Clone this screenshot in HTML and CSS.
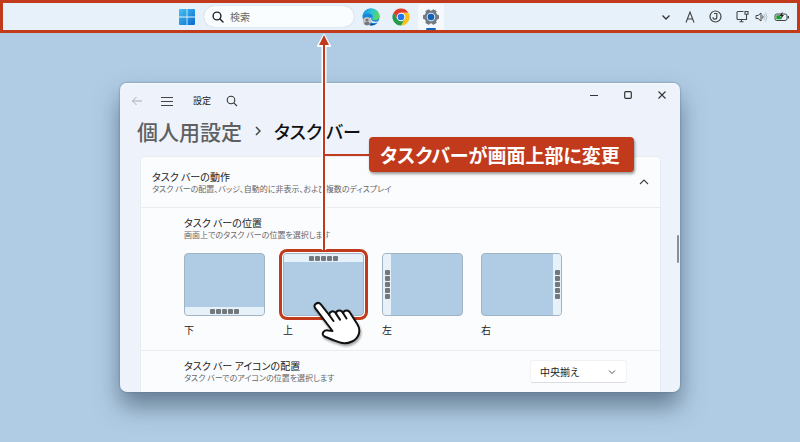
FILE: index.html
```
<!DOCTYPE html>
<html lang="ja">
<head>
<meta charset="utf-8">
<meta name="viewport" content="width=device-width, initial-scale=1">
<title>設定</title>
<link rel="stylesheet" href="styles.css">
</head>
<body>
<header class="taskbar">
  <nav class="apps">
    <button class="app" type="button" aria-label="スタート">
      <svg width="16" height="16" viewBox="0 0 16 16">
        <defs><linearGradient id="start" x1="0" y1="0" x2="1" y2="1"><stop offset="0" stop-color="#45c4f2"/><stop offset="1" stop-color="#0869cf"/></linearGradient></defs>
        <path fill="url(#start)" d="M1 0h6.600v7.600H0V1a1 1 0 0 1 1-1zM8.400 0H15a1 1 0 0 1 1 1v6.600H8.400zM0 8.400h7.600V16H1a1 1 0 0 1-1-1zM8.400 8.400H16V15a1 1 0 0 1-1 1H8.400z"/>
      </svg>
    </button>
    <label class="search">
      <svg width="12" height="12" viewBox="0 0 12 12" fill="none" stroke="#222" stroke-width="1.400" stroke-linecap="round"><circle cx="5" cy="5" r="3.900"/><path d="M8 8l3 3"/></svg>
      <input type="search" placeholder="検索" aria-label="検索">
    </label>
    <button class="app" type="button" aria-label="Edge">
      <svg width="18" height="18" viewBox="0 0 18 18">
        <defs>
          <linearGradient id="edge-top" x1="0" y1="0.300" x2="1" y2="0.500"><stop offset="0" stop-color="#1792df"/><stop offset="0.500" stop-color="#2cc3dc"/><stop offset="1" stop-color="#62d84e"/></linearGradient>
        </defs>
        <circle cx="9" cy="9" r="8.500" fill="#1686dc"/>
        <path fill="url(#edge-top)" d="M.6 8.500C1 3.500 4.600.5 9 .5c5 0 8.500 3.600 8.500 7.400 0 2.900-2.200 4.300-4.600 4.300-2 0-2.900-.7-2.900-1.400 0-.6.8-.9.8-2.200 0-1.700-1.700-3.200-4.200-3.200C3.600 5.400 1.400 6.800.6 8.500z"/>
        <path fill="#0d4f94" d="M6.500 8.500c-1.500 4 1.500 7.600 5 7.600 2 0 3.700-.8 4.700-2C14.500 16.500 12 17.600 9 17.500 4 17 3.500 11 6.500 8.500z"/>
        <path fill="#e4f0fa" d="M9.600 9.200c-.6.800-.7 2.600.6 3.600 1.700 1.300 4.700 1.200 6.400.2l-.6 1.300c-2.600 1.300-7.200 1-8.200-1.800-.5-1.600.4-3 1.800-3.300z"/>
        <circle cx="5" cy="13.300" r="4.200" fill="#c3c5c8"/><circle cx="5" cy="12" r="1.600" fill="#74777c"/><path d="M2.200 16c0-3 5.600-3 5.600 0-1.600 1.600-4 1.600-5.600 0z" fill="#74777c"/>
      </svg>
    </button>
    <button class="app" type="button" aria-label="Chrome">
      <svg width="18" height="18" viewBox="0 0 18 18">
        <path fill="#e33b2e" d="M1.600 4.750A8.500 8.500 0 0 1 16.400 4.750H9L5.300 11.100z"/>
        <path fill="#fbc116" d="M16.400 4.750A8.500 8.500 0 0 1 9 17.500L12.700 11.100 9 4.750z"/>
        <path fill="#229b4c" d="M9 17.500A8.500 8.500 0 0 1 1.600 4.750L5.300 11.100H12.700z"/>
        <circle cx="9" cy="9" r="4.300" fill="#fff"/><circle cx="9" cy="9" r="3.300" fill="#2077e8"/>
      </svg>
    </button>
    <button class="app app-active" type="button" aria-label="設定">
      <svg width="18" height="18" viewBox="0 0 18 18">
        <g fill="#727a84"><circle cx="9" cy="9" r="6.600"/>
        <rect x="6.700" y="1" width="4.600" height="16" rx="1" transform="rotate(30 9 9)"/>
        <rect x="6.700" y="1" width="4.600" height="16" rx="1" transform="rotate(90 9 9)"/>
        <rect x="6.700" y="1" width="4.600" height="16" rx="1" transform="rotate(150 9 9)"/></g>
        <circle cx="9" cy="9" r="4.300" fill="#dce8f2"/><circle cx="9" cy="9" r="3.300" fill="#1261b4"/>
      </svg>
    </button>
  </nav>
  <div class="tray">
    <svg width="10" height="10" viewBox="0 0 10 10" fill="none" stroke="#333" stroke-width="1.300"><path d="M1.500 3.500L5 7l3.500-3.500"/></svg>
    <svg width="10" height="12" viewBox="0 0 10 12" fill="none" stroke="#444" stroke-width="1.100"><path d="M1 11.500L5 1l4 10.500M2.400 8h5.200"/></svg>
    <svg width="13" height="13" viewBox="0 0 13 13" fill="none" stroke="#444" stroke-width="1.200"><circle cx="6.500" cy="6.500" r="5.500"/><path d="M5 3.500h2.800v3.800a1.900 1.900 0 0 1-3.800 0"/></svg>
    <span class="status">
      <svg width="13" height="13" viewBox="0 0 13 13" fill="none" stroke="#444" stroke-width="1.100"><path d="M7.500 1.500H2a1 1 0 0 0-1 1v6a1 1 0 0 0 1 1h8.500v-4M3.500 11.800h4M5.500 9.500v2.300M9 1.500h3v2.800H9zM10.500 4.500v3"/></svg>
      <svg width="13" height="12" viewBox="0 0 13 12" fill="none" stroke="#444"><path d="M1 4.500h2L6 2v8L3 7.500H1z"/><path d="M7.500 4.500q1.200 1.500 0 3"/><path d="M9 3q2.200 3 0 6M10.500 1.500q3 4.500 0 9" stroke="#b9c5ce"/></svg>
      <svg width="16" height="12" viewBox="0 0 16 12"><rect x="1" y="3" width="12" height="6.500" rx="1.800" fill="none" stroke="#444"/><path d="M2.300 4.300H6l1.500 4H2.300z" fill="#1c9c2d"/><path d="M14.300 5v2.500" stroke="#444" stroke-width="1.400"/><path d="M8.700.5L5.500 5h2L6.800 8 10 4H8z" fill="#222"/></svg>
    </span>
  </div>
</header>

<div class="stage">
  <main class="window">
    <div class="titlebar">
      <div class="tools">
        <button type="button" aria-label="戻る"><svg width="12" height="12" viewBox="0 0 12 12" fill="none" stroke="#a9adb3"><path d="M11 6H1.500M5.500 2l-4 4 4 4"/></svg></button>
        <button type="button" aria-label="メニュー"><svg width="12" height="12" viewBox="0 0 12 12" stroke="#444"><path d="M0 2.500h12M0 6.500h12M0 10.500h12"/></svg></button>
        <span class="app-name">設定</span>
        <button type="button" aria-label="設定の検索"><svg width="12" height="12" viewBox="0 0 12 12" fill="none" stroke="#333" stroke-width="1.100"><circle cx="5" cy="5" r="3.800"/><path d="M7.800 7.800L11 11"/></svg></button>
      </div>
      <div class="controls">
        <button type="button" aria-label="最小化"><svg width="8" height="8" viewBox="0 0 8 8" stroke="#333"><path d="M0 4.500h8"/></svg></button>
        <button type="button" aria-label="最大化"><svg width="8" height="8" viewBox="0 0 8 8" fill="none" stroke="#333" stroke-width="1.200"><rect x=".7" y=".7" width="6.600" height="6.600" rx="1"/></svg></button>
        <button type="button" aria-label="閉じる"><svg width="8" height="8" viewBox="0 0 8 8" stroke="#333" stroke-width="1.100"><path d="M.5.5l7 7M7.500.5l-7 7"/></svg></button>
      </div>
    </div>
    <h1 class="crumbs">
      <a href="#">個人用設定</a>
      <svg width="6" height="10" viewBox="0 0 6 10" fill="none" stroke="#444" stroke-width="1.500"><path d="M1 1l4 4-4 4"/></svg>
      <span>タスク バー</span>
    </h1>
    <section class="card">
      <div class="row row-head">
        <div><h2>タスク バーの動作</h2><p>タスク バーの配置、バッジ、自動的に非表示、および複数のディスプレイ</p></div>
        <button type="button" aria-label="折りたたむ"><svg width="10" height="10" viewBox="0 0 10 10" fill="none" stroke="#444" stroke-width="1.100"><path d="M1 7l4-4 4 4"/></svg></button>
      </div>
      <div class="row row-position">
        <div><h2 id="position">タスク バーの位置</h2><p>画面上でのタスク バーの位置を選択します</p></div>
        <div class="options" role="radiogroup" aria-labelledby="position">
          <label class="option"><input type="radio" name="pos"><span class="tile tile-bottom"><span class="strip"><i></i><i></i><i></i><i></i><i></i></span></span>下</label>
          <label class="option"><input type="radio" name="pos" checked><span class="tile tile-top"><span class="strip"><i></i><i></i><i></i><i></i><i></i></span></span>上
            <svg class="hand" width="50" height="46" viewBox="0 0 50 46"><path fill="#fff" stroke="#111" stroke-width="2" stroke-linejoin="round" d="M3.200 8.200C.8 4.600 6 .9 8.800 4.400L17.200 15C17.500 10.700 22 10.200 24 13.600 24.500 9.700 29.500 9.600 31 13 32.500 9.300 37 9.700 38.500 13.500L45.500 24.500C49.500 31 46.500 38.500 40 41.500 32.500 45 27.500 42.600 21 40L12.500 36.500C8.500 34 12 29.500 16.500 30.500L20.500 31z"/><path d="M17.200 15L21.500 21M24 13.600l4 6M31 13l3.500 5.500" fill="none" stroke="#111" stroke-width="2" stroke-linecap="round"/></svg>
          </label>
          <label class="option"><input type="radio" name="pos"><span class="tile tile-left"><span class="strip"><i></i><i></i><i></i><i></i><i></i></span></span>左</label>
          <label class="option"><input type="radio" name="pos"><span class="tile tile-right"><span class="strip"><i></i><i></i><i></i><i></i><i></i></span></span>右</label>
        </div>
      </div>
      <div class="row row-align">
        <label for="align"><span class="row-title">タスク バー アイコンの配置</span><span class="row-note">タスク バーでのアイコンの位置を選択します</span></label>
        <span class="picker">
          <select id="align"><option>中央揃え</option><option>左揃え</option></select>
          <svg width="8" height="8" viewBox="0 0 8 8" fill="none" stroke="#555"><path d="M1 2.500l3 3 3-3"/></svg>
        </span>
      </div>
    </section>
    <span class="scrollbar"></span>
  </main>
  <svg class="pointer" width="16" height="218" viewBox="0 0 16 218">
    <path d="M8 3L14 14H9.500V217H6.500V14H2z" fill="#fff" stroke="#fff" stroke-width="2" stroke-linejoin="round"/>
    <path d="M8 3L13 13H9V218H7V13H3z" fill="#c23a1c"/>
  </svg>
  <div class="callout"><span>タスクバーが画面上部に変更</span></div>
</div>
</body>
</html>
```
FILE: styles.css
```
* { box-sizing: border-box; }
body {
  margin: 0;
  min-height: 100vh;
  overflow: hidden;
  background: #b0cce4;
  color: #222;
  font-family: "Noto Sans CJK JP", sans-serif;
  font-size: 10px;
  line-height: 14px;
}
svg { display: block; flex: none; }
button { display: grid; place-items: center; padding: 0; border: 0; background: none; }
h1, h2, p { margin: 0; font-weight: 400; }

.taskbar {
  display: flex;
  justify-content: space-between;
  height: 33px;
  padding-left: 22%;
  padding-right: 7px;
  border: 3px solid #c23a1c;
  background: #e6f1fa;
}
.apps { display: flex; align-items: center; }
.app { width: 26px; height: 26px; margin-right: 4px; }
.app:first-child { width: 16px; margin-right: 9px; }
.app-active { position: relative; background: #f5f9fd; border-radius: 3px; }
.app-active::after {
  content: "";
  position: absolute;
  bottom: 0;
  left: 8px;
  right: 8px;
  height: 2px;
  border-radius: 1px;
  background: #1268bb;
}
.search {
  display: flex;
  align-items: center;
  gap: 6px;
  width: 150px;
  height: 21px;
  margin-right: 4px;
  padding: 0 8px;
  border-radius: 11px;
  background: #fafdff;
  box-shadow: 0 0 1px #9fb2c1;
}
.search input {
  width: 100%;
  min-width: 0;
  padding: 0;
  border: 0;
  outline: 0;
  background: none;
  font: inherit;
}
.search input::placeholder { color: #666; }
.tray { display: flex; align-items: center; gap: 14px; }
.status { display: flex; align-items: center; gap: 6px; }

.stage { position: relative; width: 70%; margin: 50px auto 0; }
.window {
  position: relative;
  overflow: hidden;
  padding: 0 19px 0 20px;
  border-radius: 7px;
  background: #eef3fb;
  box-shadow: inset 0 1px #f6faff, 0 0 2px #54718b, 0 14px 24px rgba(40, 60, 80, .55);
}
.titlebar { display: flex; justify-content: space-between; margin: 0 -18px; }
.tools { display: flex; align-items: center; height: 36px; }
.tools button { width: 30px; height: 24px; }
.app-name { padding: 0 6px 0 11px; font-size: 9px; }
.controls { display: flex; height: 24px; }
.controls button { width: 34px; }

.crumbs {
  display: flex;
  align-items: center;
  gap: 13px;
  height: 23px;
  margin: 0 0 14px -3px;
  font-size: 21px;
  font-weight: 500;
  white-space: nowrap;
}
.crumbs a { color: #5e6062; text-decoration: none; }
.crumbs span { color: #111; font-size: 18px; font-feature-settings: "palt"; }

.card {
  border: 1px solid #e7ecf2;
  border-bottom: 0;
  border-radius: 4px 4px 0 0;
  background: #fbfcfe;
  font-feature-settings: "palt";
}
.row { padding: 0 11px; }
.row + .row { border-top: 1px solid #e9edf2; }
.row h2, .row-title { display: block; font-size: 10px; line-height: 13px; color: #222; }
.row p, .row-note { display: block; font-size: 8px; line-height: 12px; color: #666; }
.row-head { display: flex; align-items: center; justify-content: space-between; height: 50px; }
.row-position { padding: 8px 43px 13px; }
.row-align { display: flex; align-items: center; justify-content: space-between; height: 42px; padding: 0 33px 0 43px; }

.options { display: flex; gap: 18px; margin-top: 12px; }
.option { position: relative; width: 81px; }
.option input { position: absolute; opacity: 0; margin: 0; }
.tile {
  display: flex;
  height: 63px;
  margin-bottom: 7px;
  overflow: hidden;
  border: 1px solid #a1b4c4;
  border-radius: 4px;
  background: #b0cce4;
}
.strip { display: flex; align-items: center; justify-content: center; gap: 1px; background: #e6f1fa; }
.strip i { width: 5px; height: 5px; border-radius: 1px; background: #73787d; }
.tile-bottom, .tile-top { flex-direction: column; }
.tile-bottom, .tile-right { justify-content: flex-end; }
.tile-bottom .strip, .tile-top .strip { height: 8px; }
.tile-left .strip, .tile-right .strip { flex-direction: column; width: 8px; }
.option input:checked + .tile { box-shadow: 0 0 0 1px #fff, 0 0 0 4px #c23a1c; }
.hand { position: absolute; z-index: 3; left: 29px; top: 47px; filter: drop-shadow(1px 2px 1px rgba(0, 0, 0, .35)); }

.picker { position: relative; display: flex; align-items: center; }
.picker select {
  appearance: none;
  width: 97px;
  height: 23px;
  padding: 0 9px;
  border: 1px solid #f0f2f5;
  border-bottom-color: #dadde1;
  border-radius: 3px;
  background: #fff;
  color: #222;
  font: inherit;
}
.picker svg { position: absolute; right: 11px; pointer-events: none; }
.scrollbar { position: absolute; right: 1px; top: 152px; width: 2px; height: 28px; border-radius: 1px; background: #8a8f95; }

.pointer { position: absolute; left: 196px; top: -51px; }
.callout {
  position: absolute;
  top: 54px;
  left: 205px;
  display: flex;
  align-items: center;
}
.callout::before { content: ""; width: 44px; height: 2px; background: #c23a1c; }
.callout span {
  padding: 0 14px 0 11px;
  border-radius: 4px;
  background: #c23a1c;
  box-shadow: 1px 2px 3px rgba(0, 0, 0, .4);
  color: #fff;
  font-size: 19px;
  font-weight: 700;
  font-feature-settings: "palt";
  line-height: 35px;
  white-space: nowrap;
}
```
